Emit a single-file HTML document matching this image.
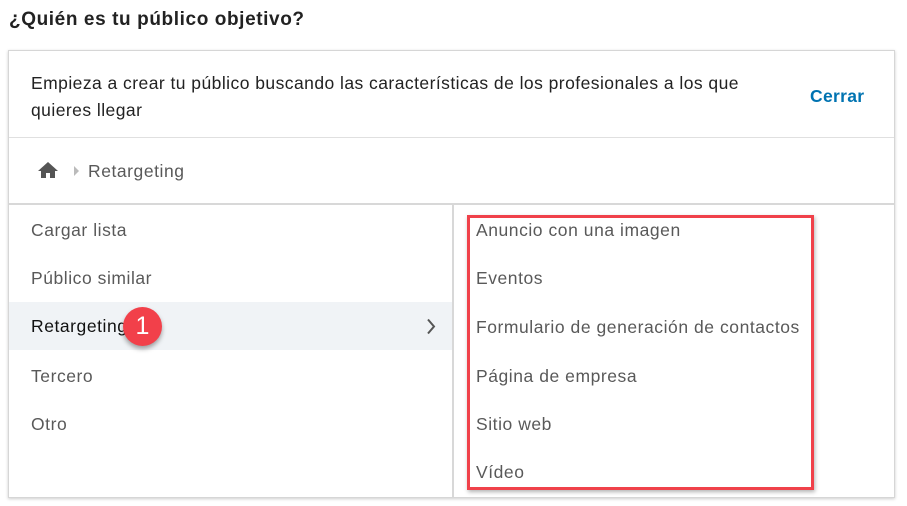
<!DOCTYPE html>
<html><head><meta charset="utf-8"><style>
*{margin:0;padding:0;box-sizing:border-box}
body{width:907px;height:506px;background:#fff;font-family:"Liberation Sans",sans-serif;position:relative;overflow:hidden;color:#595959}
.a{position:absolute;white-space:nowrap}
h1{position:absolute;left:9px;top:9px;font-size:19px;letter-spacing:0.6px;font-weight:bold;color:#222}
.card{position:absolute;left:8px;top:50px;width:887px;height:448px;border:1px solid #d6d6d6;box-shadow:0 1px 3px rgba(0,0,0,.2)}
.t{font-size:17.5px;letter-spacing:0.55px;color:#595959}
</style></head><body>
<h1>¿Quién es tu público objetivo?</h1>
<div class="card"></div>
<div class="a" style="left:31px;top:70px;font-size:17.5px;letter-spacing:0.45px;color:#222;line-height:27px;white-space:normal;width:740px">Empieza a crear tu público buscando las características de los profesionales a los que quieres llegar</div>
<div class="a" style="left:810px;top:86px;font-size:17.5px;letter-spacing:0.3px;font-weight:bold;color:#0073b1">Cerrar</div>
<div class="a" style="left:9px;top:137px;width:885px;height:1px;background:#e0e0e0"></div>
<svg class="a" style="left:37px;top:161px" width="22" height="18" viewBox="0 0 22 18"><path d="M11 1 L21 10 H18 V17 H13 V12 H9 V17 H4 V10 H1 Z" fill="#555"/></svg>
<svg class="a" style="left:74px;top:166px" width="6" height="10"><path d="M0 0 L5 5 L0 10Z" fill="#bbb"/></svg>
<div class="a t" style="left:88px;top:161px">Retargeting</div>
<div class="a" style="left:9px;top:203px;width:885px;height:2px;background:#d8d8d8"></div>
<div class="a" style="left:452px;top:205px;width:2px;height:292px;background:#d8d8d8"></div>
<div class="a" style="left:9px;top:302px;width:443px;height:48px;background:#f0f3f6"></div>
<div class="a t" style="left:31px;top:220px">Cargar lista</div>
<div class="a t" style="left:31px;top:268px">Público similar</div>
<div class="a t" style="left:31px;top:316px;color:#111">Retargeting</div>
<svg class="a" style="left:426px;top:318px" width="10" height="17"><path d="M2 1.5 L8 8.5 L2 15.5" fill="none" stroke="#555" stroke-width="2"/></svg>
<div class="a" style="left:123px;top:307px;width:39px;height:39px;border-radius:50%;background:#f2404a;box-shadow:0 3px 5px rgba(0,0,0,.35);color:#fff;font-size:25px;text-align:center;line-height:39px">1</div>
<div class="a t" style="left:31px;top:366px">Tercero</div>
<div class="a t" style="left:31px;top:414px">Otro</div>
<div class="a t" style="left:476px;top:220px">Anuncio con una imagen</div>
<div class="a t" style="left:476px;top:268px">Eventos</div>
<div class="a t" style="left:476px;top:317px">Formulario de generación de contactos</div>
<div class="a t" style="left:476px;top:366px">Página de empresa</div>
<div class="a t" style="left:476px;top:414px">Sitio web</div>
<div class="a t" style="left:476px;top:462px">Vídeo</div>
<div class="a" style="left:467px;top:215px;width:347px;height:275px;border:3px solid #f0414a;box-shadow:1px 2px 4px rgba(0,0,0,.3)"></div>
</body></html>
